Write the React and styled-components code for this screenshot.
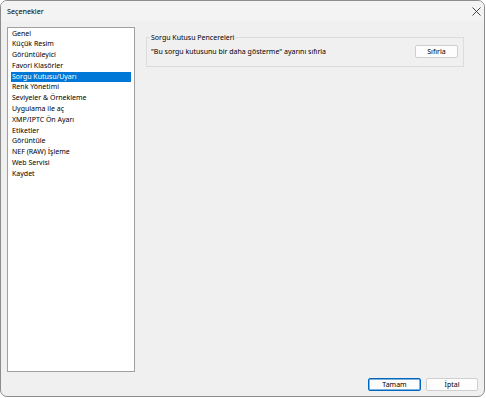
import React, { useState } from 'react';
import styled, { createGlobalStyle } from 'styled-components';

const items = [
  'Genel',
  'Küçük Resim',
  'Görüntüleyici',
  'Favori Klasörler',
  'Sorgu Kutusu/Uyarı',
  'Renk Yönetimi',
  'Seviyeler & Örnekleme',
  'Uygulama ile aç',
  'XMP/IPTC Ön Ayarı',
  'Etiketler',
  'Görüntüle',
  'NEF (RAW) İşleme',
  'Web Servisi',
  'Kaydet'
];

const App = () => {
  const [selected, setSelected] = useState(4);

  return (
    <>
      <GlobalStyle />
      <Window>
        <TitleBar>
          <Title>Seçenekler</Title>
          <CloseButton>
            <svg width="9" height="9" viewBox="0 0 9 9">
              <path d="M0.5 0.5 L8.5 8.5 M8.5 0.5 L0.5 8.5" stroke="#333" strokeWidth="0.9" fill="none" />
            </svg>
          </CloseButton>
        </TitleBar>
        <Body>
          <ListBox>
            {items.map((label, i) => (
              <ListItem key={label} $active={i === selected} onClick={() => setSelected(i)}>
                {label}
              </ListItem>
            ))}
          </ListBox>
          <Pane>
            <GroupBox>
              <Legend>Sorgu Kutusu Pencereleri</Legend>
              <GroupRow>
                <span>"Bu sorgu kutusunu bir daha gösterme" ayarını sıfırla</span>
                <Button $width={43}>Sıfırla</Button>
              </GroupRow>
            </GroupBox>
          </Pane>
        </Body>
        <Footer>
          <Button $width={53} $default>Tamam</Button>
          <Button $width={52}>İptal</Button>
        </Footer>
      </Window>
    </>
  );
};

const GlobalStyle = createGlobalStyle`
  html, body {
    margin: 0;
    padding: 0;
    background: #ffffff;
  }
  body {
    font-family: "Noto Sans", "Open Sans", sans-serif;
    font-size: 7px;
    color: #000;
  }
`;

const Window = styled.div`
  width: 485px;
  height: 397px;
  box-sizing: border-box;
  border: 1px solid #8c8c8c;
  border-radius: 7px;
  background: #f0f0f0;
  display: flex;
  flex-direction: column;
  overflow: hidden;
`;

const TitleBar = styled.div`
  height: 20px;
  display: flex;
  align-items: center;
  justify-content: space-between;
  padding: 0 0 0 6px;
  background: #f3f3f3;
`;

const Title = styled.div`
  font-size: 7.2px;
  color: #000;
`;

const CloseButton = styled.div`
  width: 16px;
  height: 16px;
  display: flex;
  align-items: center;
  justify-content: center;
`;

const Body = styled.div`
  flex: 1;
  display: flex;
  padding: 6px 0 0 6px;
  gap: 11px;
`;

const ListBox = styled.div`
  width: 128px;
  height: 345px;
  box-sizing: border-box;
  background: #fff;
  border: 1px solid #a0a0a0;
  padding: 0.5px 3px 0 3px;
`;

const ListItem = styled.div`
  height: 10.8px;
  line-height: 10.8px;
  padding-left: 1px;
  white-space: nowrap;
  background: ${p => (p.$active ? '#0078d7' : 'transparent')};
  color: ${p => (p.$active ? '#fff' : '#000')};
`;

const Pane = styled.div`
  flex: 1;
  padding-top: 6px;
`;

const GroupBox = styled.fieldset`
  width: 318px;
  box-sizing: border-box;
  margin: 0;
  border: 1px solid #dcdcdc;
  padding: 3px 5px 8px 4px;
`;

const Legend = styled.legend`
  padding: 0 1px;
  margin-left: -1px;
  font-size: 7px;
  line-height: 9px;
`;

const GroupRow = styled.div`
  display: flex;
  align-items: center;
  justify-content: space-between;
  white-space: nowrap;
`;

const Button = styled.button`
  width: ${p => p.$width}px;
  height: 13px;
  box-sizing: border-box;
  padding: 0;
  font-family: inherit;
  font-size: 7px;
  line-height: 10px;
  color: #000;
  background: #fdfdfd;
  border: 1px solid ${p => (p.$default ? '#0067c0' : '#cfcfcf')};
  border-radius: 2px;
  box-shadow: ${p => (p.$default ? 'inset 0 0 0 0.5px #0067c0' : 'none')};
`;

const Footer = styled.div`
  display: flex;
  justify-content: flex-end;
  gap: 5px;
  padding: 6px 6px 5px 0;
`;

export default App;
